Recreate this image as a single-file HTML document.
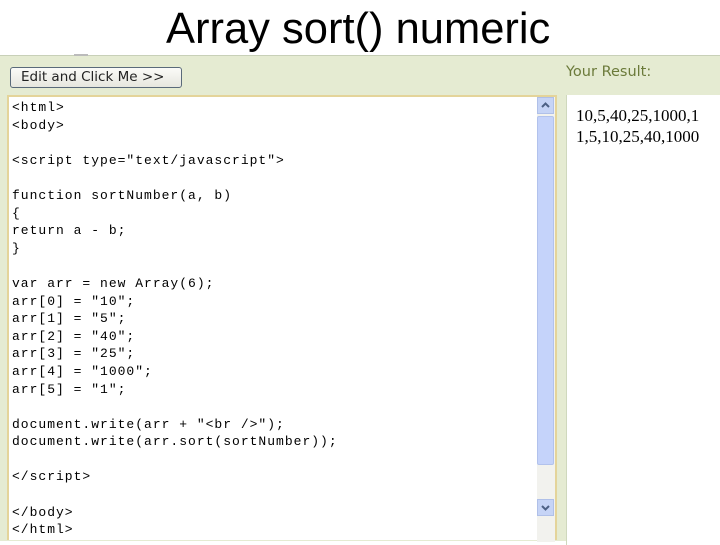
<!DOCTYPE html>
<html><head><style>
body{margin:0;width:720px;height:540px;overflow:hidden;background:#fff;position:relative;font-family:"Liberation Sans",sans-serif}
.title{position:absolute;left:166px;top:5px;font-size:43.5px;color:#000;white-space:nowrap}
.panel{position:absolute;left:0;top:55px;width:720px;height:485px;background:#e5ebd2;border-top:1px solid #c8d0b8}
.btn{position:absolute;left:10px;top:67px;width:172px;height:21px;border:1px solid #5a6a7a;border-radius:3px;background:linear-gradient(#fbfbf8,#e6e6de);font-family:"DejaVu Sans",sans-serif;font-size:13.5px;line-height:19px;color:#222;box-sizing:border-box;padding-left:10px;white-space:nowrap}
.yr{position:absolute;left:566px;top:64px;font-family:"DejaVu Sans",sans-serif;font-size:14.5px;color:#6b7a3a}
.ta{position:absolute;left:7px;top:95px;width:550px;height:445px;background:#fff;border:2px solid #e4d49a;border-bottom:none;box-sizing:border-box}
pre{position:absolute;left:12px;top:99px;margin:0;font-family:"Liberation Mono",monospace;font-size:13px;letter-spacing:1px;line-height:17.6px;color:#000}
.sb{position:absolute;left:537px;top:97px;width:18px;height:445px;background:#f2f2ee}
.up,.dn{position:absolute;left:537px;width:17px;height:17px;background:#c6d4f6;border:1px solid #b0c0e8;box-sizing:border-box}
.thumb{position:absolute;left:537px;top:116px;width:17px;height:349px;background:#c5d3fa;border:1px solid #b2c2ec;box-sizing:border-box;border-radius:2px}
.res{position:absolute;left:566px;top:95px;width:160px;height:450px;background:#fff;border-left:1px solid #cfd8bd}
.rt{position:absolute;left:576px;top:105px;font-family:"Liberation Serif",serif;font-size:17px;line-height:21px;color:#000}
</style></head><body>
<div class="title">Array sort() numeric</div>
<div class="panel"></div>
<div style="position:absolute;left:74px;top:54px;width:14px;height:2px;background:#bbb"></div>
<div class="btn">Edit and Click Me &gt;&gt;</div>
<div class="yr">Your Result:</div>
<div class="ta"></div>
<pre>&lt;html&gt;
&lt;body&gt;

&lt;script type="text/javascript"&gt;

function sortNumber(a, b)
{
return a - b;
}

var arr = new Array(6);
arr[0] = "10";
arr[1] = "5";
arr[2] = "40";
arr[3] = "25";
arr[4] = "1000";
arr[5] = "1";

document.write(arr + "&lt;br /&gt;");
document.write(arr.sort(sortNumber));

&lt;/script&gt;

&lt;/body&gt;
&lt;/html&gt;</pre>
<div class="sb"></div>
<div class="up" style="top:97px"><svg width="15" height="15" style="display:block"><path d="M4 9 L7.5 5.5 L11 9" stroke="#4d6185" stroke-width="2" fill="none"/></svg></div>
<div class="thumb"></div>
<div class="dn" style="top:499px"><svg width="15" height="15" style="display:block"><path d="M4 6 L7.5 9.5 L11 6" stroke="#4d6185" stroke-width="2" fill="none"/></svg></div>
<div class="res"></div>
<div class="rt">10,5,40,25,1000,1<br>1,5,10,25,40,1000</div>
</body></html>
